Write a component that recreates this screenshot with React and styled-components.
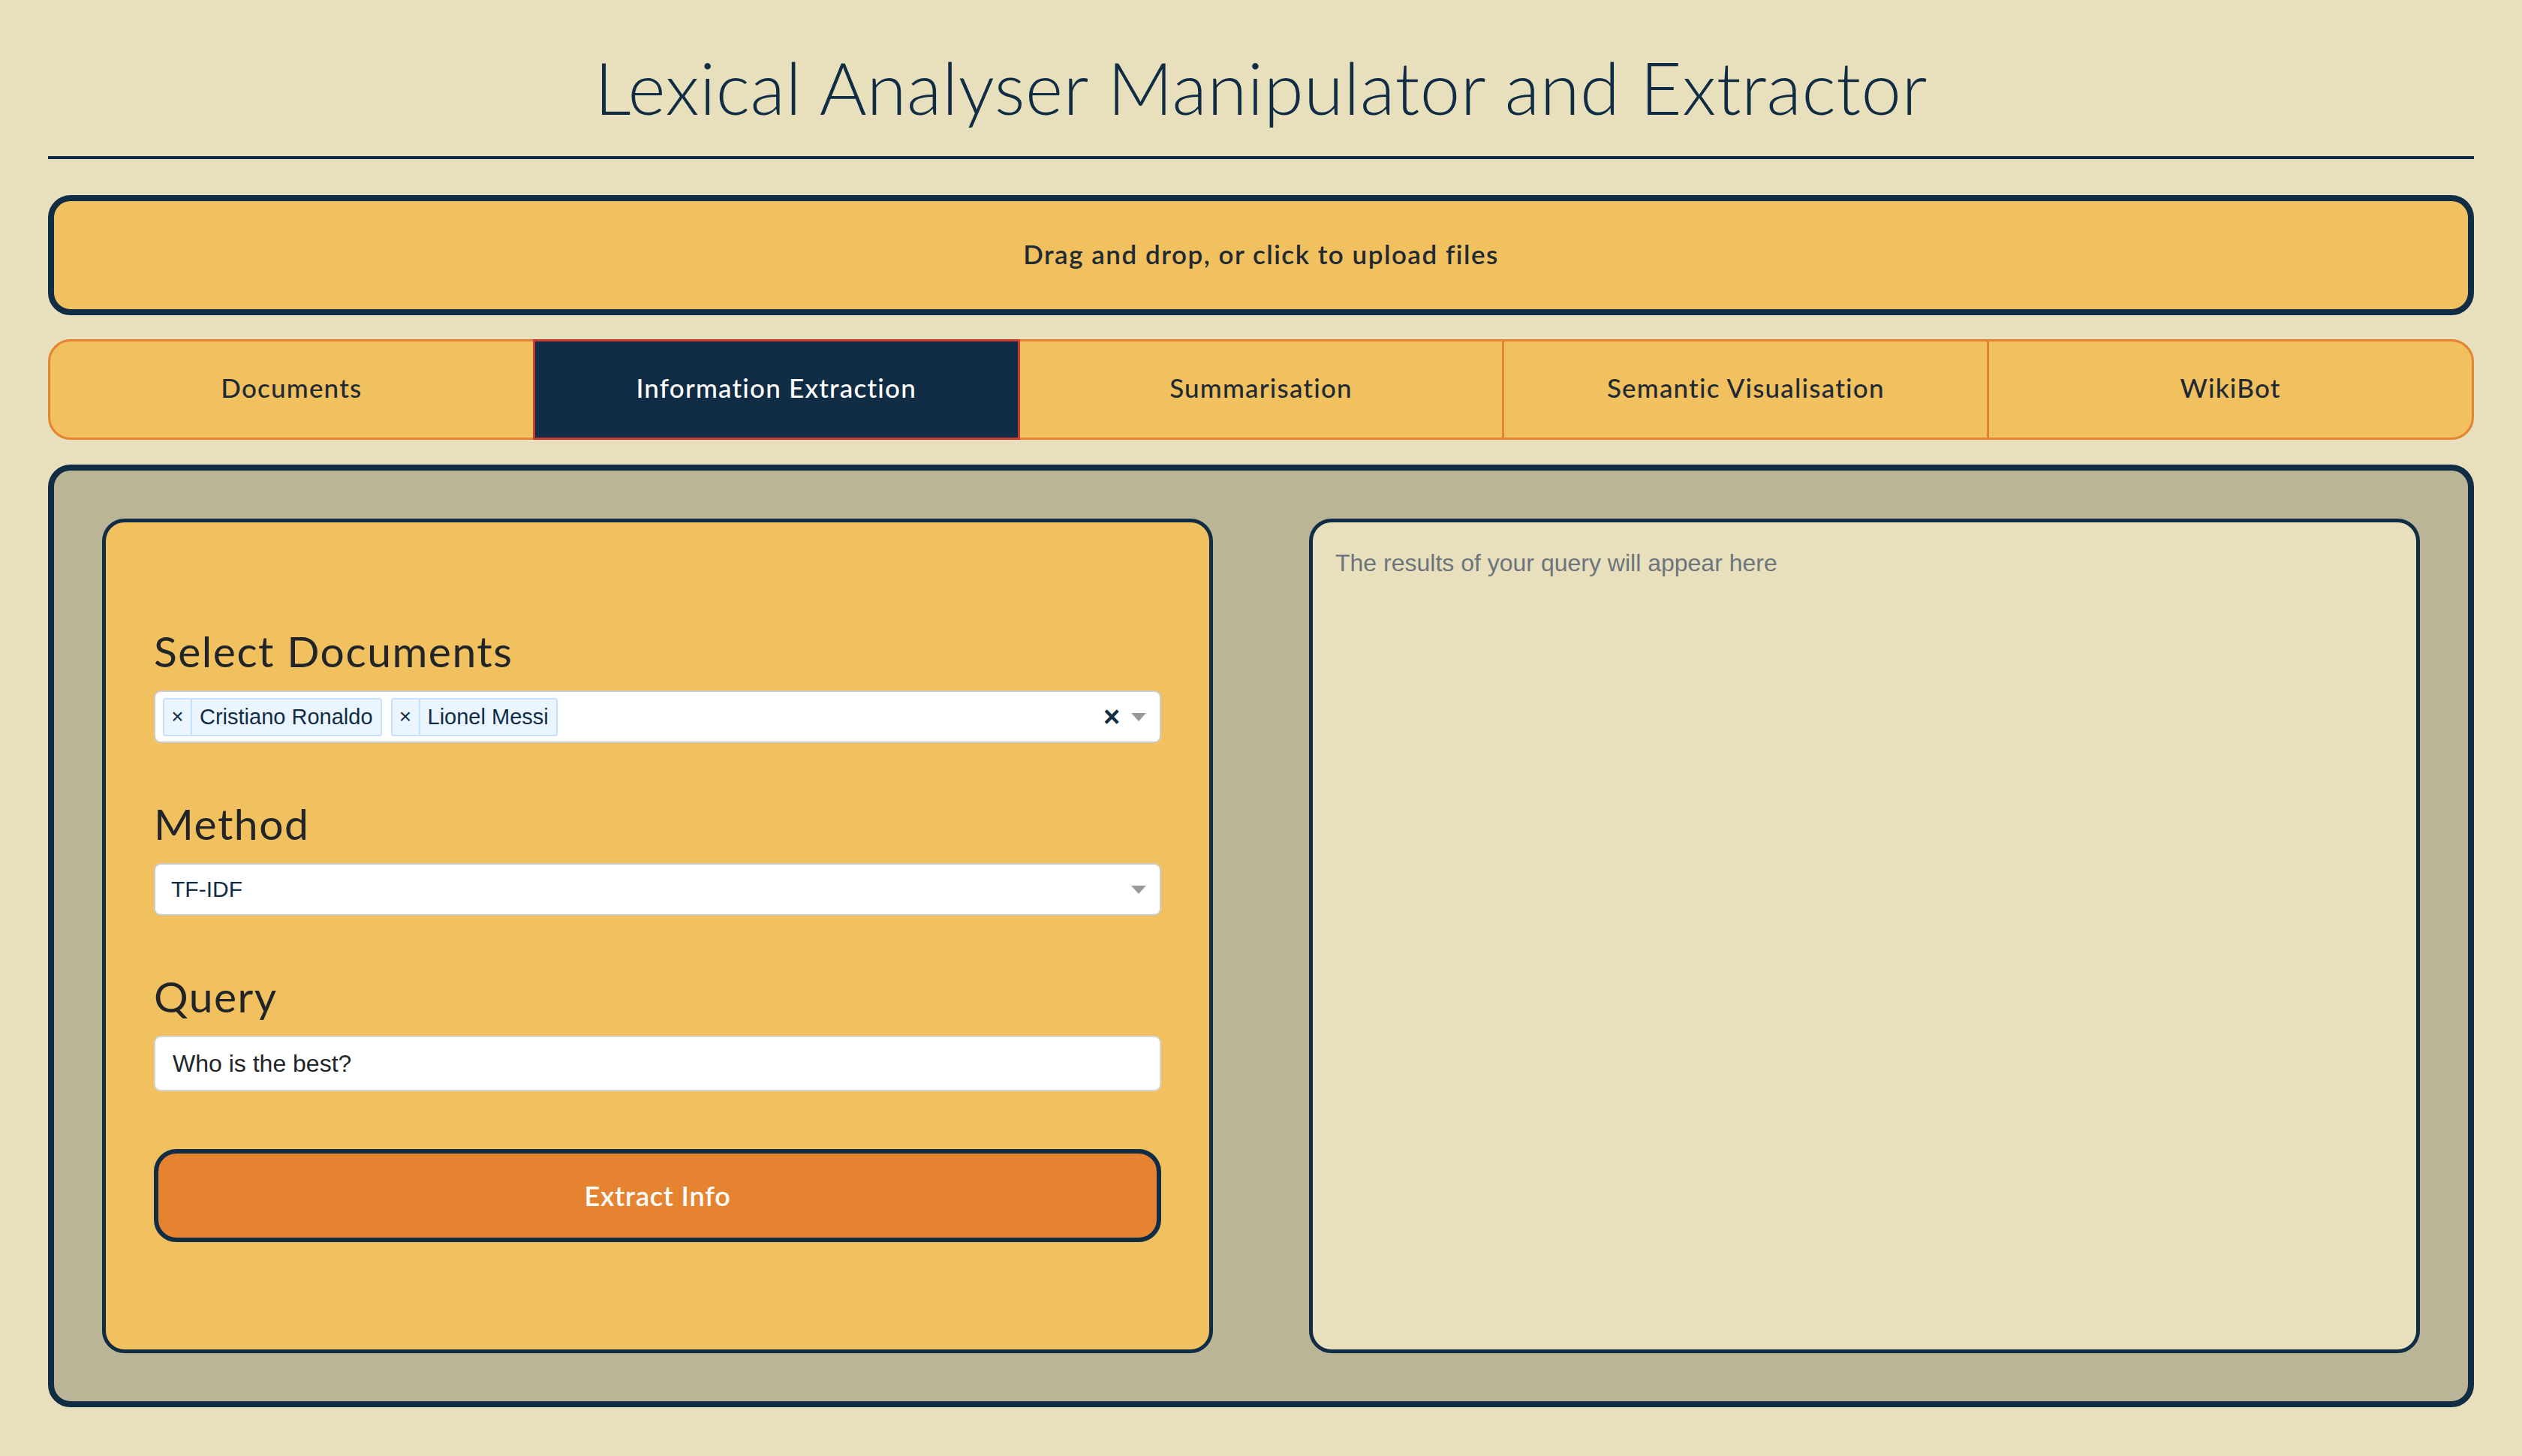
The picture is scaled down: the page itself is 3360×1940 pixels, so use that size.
import { useState } from 'react';
import styled, { createGlobalStyle } from 'styled-components';

const NAVY = '#112d45';
const CREAM = '#e8e0bc';
const KHAKI = '#bab596';
const YELLOW = '#f1c05f';
const ORANGE = '#e68330';
const RED = '#c83c32';

const TABS = ['Documents', 'Information Extraction', 'Summarisation', 'Semantic Visualisation', 'WikiBot'];

const App = () => {
  const [activeTab, setActiveTab] = useState(1);
  const [docs, setDocs] = useState(['Cristiano Ronaldo', 'Lionel Messi']);
  const [method] = useState('TF-IDF');
  const [query, setQuery] = useState('Who is the best?');

  const removeDoc = (name) => setDocs((prev) => prev.filter((d) => d !== name));

  return (
    <>
      <GlobalStyle />
      <Page>
        <Header>
          <Title>Lexical Analyser Manipulator and Extractor</Title>
        </Header>
        <Divider />

        <UploadZone>Drag and drop, or click to upload files</UploadZone>

        <TabBar>
          {TABS.map((tab, i) => (
            <Tab key={tab} $active={i === activeTab} onClick={() => setActiveTab(i)}>
              {tab}
            </Tab>
          ))}
        </TabBar>

        <Panel>
          <FormCard>
            <FieldGroup>
              <FieldLabel>Select Documents</FieldLabel>
              <SelectControl $multi>
                <ValueArea>
                  {docs.map((doc) => (
                    <Chip key={doc}>
                      <ChipRemove onClick={() => removeDoc(doc)}>×</ChipRemove>
                      <ChipLabel>{doc}</ChipLabel>
                    </Chip>
                  ))}
                </ValueArea>
                {docs.length > 0 && <ClearZone onClick={() => setDocs([])}>×</ClearZone>}
                <ArrowZone>
                  <Arrow />
                </ArrowZone>
              </SelectControl>
            </FieldGroup>

            <FieldGroup>
              <FieldLabel>Method</FieldLabel>
              <SelectControl>
                <ValueArea>
                  <SingleValue>{method}</SingleValue>
                </ValueArea>
                <ArrowZone>
                  <Arrow />
                </ArrowZone>
              </SelectControl>
            </FieldGroup>

            <FieldGroup>
              <FieldLabel>Query</FieldLabel>
              <QueryInput value={query} onChange={(e) => setQuery(e.target.value)} />
            </FieldGroup>

            <ExtractButton>Extract Info</ExtractButton>
          </FormCard>

          <ResultsCard>
            <Placeholder>The results of your query will appear here</Placeholder>
          </ResultsCard>
        </Panel>
      </Page>
    </>
  );
};

const GlobalStyle = createGlobalStyle`
  * {
    box-sizing: border-box;
  }

  body {
    margin: 0;
    background-color: ${CREAM};
    font-family: 'Lato', 'Liberation Sans', sans-serif;
  }
`;

const Page = styled.div`
  padding: 0 64px 62px;
`;

const Header = styled.header`
  padding-top: 68px;
  text-align: center;
`;

const Title = styled.h1`
  margin: 0;
  font-family: 'Lato', sans-serif;
  font-weight: 300;
  font-size: 96px;
  line-height: 96px;
  letter-spacing: 0.5px;
  color: ${NAVY};
`;

const Divider = styled.hr`
  margin: 44px 0 0;
  border: none;
  height: 4px;
  background-color: ${NAVY};
`;

const UploadZone = styled.div`
  margin-top: 48px;
  height: 160px;
  display: flex;
  align-items: center;
  justify-content: center;
  padding-bottom: 4px;
  background-color: ${YELLOW};
  border: 8px solid ${NAVY};
  border-radius: 30px;
  font-size: 35px;
  font-weight: 600;
  letter-spacing: 1.5px;
  color: #1f2a33;
  cursor: pointer;
`;

const TabBar = styled.div`
  margin-top: 32px;
  display: flex;
  height: 134px;
`;

const Tab = styled.div`
  position: relative;
  z-index: ${(props) => (props.$active ? 1 : 0)};
  flex: 1;
  display: flex;
  align-items: center;
  justify-content: center;
  margin-left: -3px;
  padding-bottom: 6px;
  background-color: ${(props) => (props.$active ? NAVY : YELLOW)};
  border: 3px solid ${(props) => (props.$active ? RED : ORANGE)};
  color: ${(props) => (props.$active ? '#ffffff' : '#1f2a33')};
  font-size: 35px;
  font-weight: 500;
  letter-spacing: 1.2px;
  cursor: pointer;

  &:first-child {
    margin-left: 0;
    border-radius: 30px 0 0 30px;
  }

  &:last-child {
    border-radius: 0 30px 30px 0;
  }
`;

const Panel = styled.div`
  margin-top: 33px;
  display: grid;
  grid-template-columns: 1fr 1fr;
  gap: 128px;
  padding: 64px;
  background-color: ${KHAKI};
  border: 8px solid ${NAVY};
  border-radius: 30px;
`;

const FormCard = styled.div`
  height: 1112px;
  display: flex;
  flex-direction: column;
  justify-content: center;
  padding: 64px;
  background-color: ${YELLOW};
  border: 5px solid ${NAVY};
  border-radius: 30px;
`;

const FieldGroup = styled.div`
  margin-bottom: 79px;

  &:last-of-type {
    margin-bottom: 77px;
  }
`;

const FieldLabel = styled.div`
  margin-bottom: 25px;
  font-family: 'Lato', sans-serif;
  font-size: 57px;
  line-height: 56px;
  letter-spacing: 1.5px;
  color: #212529;
`;

const SelectControl = styled.div`
  display: flex;
  align-items: center;
  height: 70px;
  padding-left: ${(props) => (props.$multi ? '10px' : '0')};
  background-color: #ffffff;
  border: 2px solid #cccccc;
  border-radius: 9px;
  font-family: 'Liberation Sans', Arial, sans-serif;
`;

const ValueArea = styled.div`
  flex: 1;
  display: flex;
  align-items: center;
  gap: 12px;
`;

const Chip = styled.div`
  display: flex;
  height: 51px;
  background-color: #ebf5ff;
  border: 2px solid #c2e0ff;
  border-radius: 4px;
  color: ${NAVY};
  font-size: 29px;
`;

const ChipRemove = styled.span`
  width: 37px;
  display: flex;
  align-items: center;
  justify-content: center;
  border-right: 2px solid #c2e0ff;
  font-size: 28px;
  cursor: pointer;
`;

const ChipLabel = styled.span`
  display: flex;
  align-items: center;
  padding: 0 10px;
`;

const SingleValue = styled.span`
  padding-left: 21px;
  font-size: 30px;
  color: ${NAVY};
`;

const ClearZone = styled.span`
  width: 44px;
  display: flex;
  justify-content: center;
  font-size: 38px;
  font-weight: 700;
  color: ${NAVY};
  cursor: pointer;
`;

const ArrowZone = styled.span`
  width: 42px;
  padding-right: 14px;
  display: flex;
  justify-content: center;
`;

const Arrow = styled.span`
  width: 0;
  height: 0;
  border-style: solid;
  border-width: 11px 10px 0;
  border-color: #999999 transparent transparent;
`;

const QueryInput = styled.input`
  display: block;
  width: 100%;
  height: 74px;
  padding: 0 23px;
  background-color: #ffffff;
  border: 2px solid #d4d4d4;
  border-radius: 9px;
  font-family: 'Liberation Sans', Arial, sans-serif;
  font-size: 32px;
  color: #212529;
  outline: none;
`;

const ExtractButton = styled.button`
  width: 100%;
  height: 124px;
  background-color: ${ORANGE};
  border: 6px solid ${NAVY};
  border-radius: 30px;
  color: #ffffff;
  font-family: 'Lato', sans-serif;
  font-size: 36px;
  font-weight: 600;
  letter-spacing: 0.8px;
  cursor: pointer;
`;

const ResultsCard = styled.div`
  height: 1112px;
  padding: 30px;
  background-color: ${CREAM};
  border: 5px solid ${NAVY};
  border-radius: 30px;
`;

const Placeholder = styled.p`
  margin: 0;
  font-family: 'Liberation Sans', Arial, sans-serif;
  font-size: 32px;
  line-height: 48px;
  color: #6c757d;
`;

export default App;
